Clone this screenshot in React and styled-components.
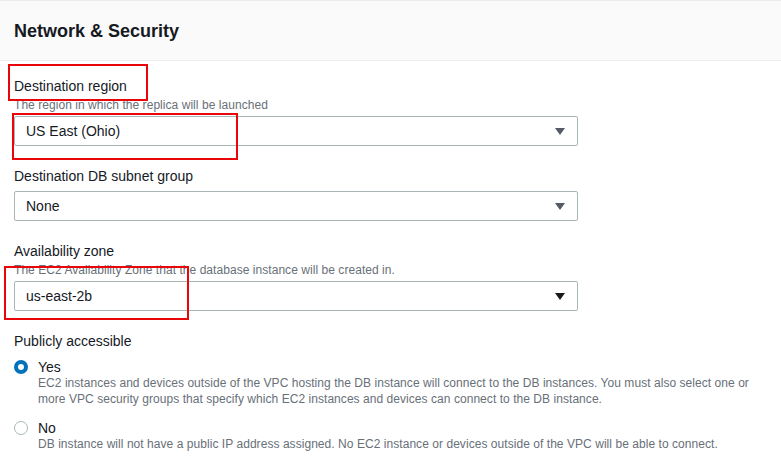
import React from 'react';
import styled, { createGlobalStyle } from 'styled-components';

const GlobalStyle = createGlobalStyle`
  body {
    margin: 0;
    background: #ffffff;
    font-family: "Liberation Sans", Arial, sans-serif;
    color: #16191f;
  }
`;

const Page = styled.div`
  position: relative;
  width: 781px;
  height: 468px;
  overflow: hidden;
  border-top: 1px solid #eaeded;
  box-sizing: border-box;
`;

const Header = styled.div`
  background: #fafafa;
  border-bottom: 1px solid #eaeded;
  height: 59px;
  padding: 0 14px;
  display: flex;
  align-items: center;
`;

const Title = styled.h2`
  margin: 0;
  font-size: 18px;
  font-weight: 700;
  line-height: 22px;
  color: #16191f;
`;

const Body = styled.div`
  padding: 14px 14px 0 14px;
  display: flex;
  flex-direction: column;
  gap: 19px;
`;

const Field = styled.div`
  display: flex;
  flex-direction: column;
`;

const Label = styled.div`
  font-size: 14px;
  line-height: 22px;
  color: #16191f;
`;

const Desc = styled.div`
  font-size: 12px;
  line-height: 16px;
  color: #687078;
  letter-spacing: 0.05px;
`;

const SelectBox = styled.div`
  margin-top: ${p => (p.$tight ? '3px' : '4px')};
  width: 564px;
  height: 30px;
  box-sizing: border-box;
  border: 1px solid #aab7b8;
  border-radius: 2px;
  display: flex;
  align-items: center;
  justify-content: space-between;
  padding: 0 12px 0 11px;
  font-size: 14px;
  color: #16191f;
`;

const Caret = styled.svg`
  width: 10px;
  height: 7px;
  fill: ${p => (p.$dark ? '#16191f' : '#545b64')};
`;

const RadioGroup = styled.div`
  display: flex;
  flex-direction: column;
  gap: 12px;
  margin-top: 6px;
`;

const RadioRow = styled.div`
  display: grid;
  grid-template-columns: 14px 1fr;
  column-gap: 10px;
`;

const RadioDot = styled.span`
  width: 14px;
  height: 14px;
  margin-top: 2px;
  box-sizing: border-box;
  border-radius: 50%;
  background: #ffffff;
  border: ${p => (p.$checked ? '4px solid #0073bb' : '1.5px solid #aab7b8')};
`;

const RadioText = styled.div`
  display: flex;
  flex-direction: column;
`;

const RadioTitle = styled.div`
  font-size: 14px;
  line-height: 18px;
  color: #16191f;
`;

const RadioDesc = styled(Desc)`
  max-width: 725px;
  margin-top: -1px;
`;

const Mark = styled.div`
  position: absolute;
  border: 2px solid #e8060b;
  box-sizing: border-box;
  pointer-events: none;
`;

function Select({ value, dark, tight }) {
  return (
    <SelectBox $tight={tight}>
      <span>{value}</span>
      <Caret $dark={dark} viewBox="0 0 10 7">
        <polygon points="0,0 10,0 5,7" />
      </Caret>
    </SelectBox>
  );
}

export default function App() {
  return (
    <>
      <GlobalStyle />
      <Page>
        <Header>
          <Title>Network &amp; Security</Title>
        </Header>
        <Body>
          <Field>
            <Label>Destination region</Label>
            <Desc>The region in which the replica will be launched</Desc>
            <Select value="US East (Ohio)" tight />
          </Field>
          <Field>
            <Label>Destination DB subnet group</Label>
            <Select value="None" />
          </Field>
          <Field>
            <Label>Availability zone</Label>
            <Desc>The EC2 Availability Zone that the database instance will be created in.</Desc>
            <Select value="us-east-2b" dark tight />
          </Field>
          <Field>
            <Label>Publicly accessible</Label>
            <RadioGroup>
              <RadioRow>
                <RadioDot $checked />
                <RadioText>
                  <RadioTitle>Yes</RadioTitle>
                  <RadioDesc>
                    EC2 instances and devices outside of the VPC hosting the DB instance will connect to the DB instances. You must also select one or more VPC security groups that specify which EC2 instances and devices can connect to the DB instance.
                  </RadioDesc>
                </RadioText>
              </RadioRow>
              <RadioRow>
                <RadioDot />
                <RadioText>
                  <RadioTitle>No</RadioTitle>
                  <RadioDesc>
                    DB instance will not have a public IP address assigned. No EC2 instance or devices outside of the VPC will be able to connect.
                  </RadioDesc>
                </RadioText>
              </RadioRow>
            </RadioGroup>
          </Field>
        </Body>
        <Mark style={{ left: 8, top: 63, width: 140, height: 37 }} />
        <Mark style={{ left: 12, top: 112, width: 226, height: 47 }} />
        <Mark style={{ left: 4, top: 265, width: 185, height: 54 }} />
      </Page>
    </>
  );
}
